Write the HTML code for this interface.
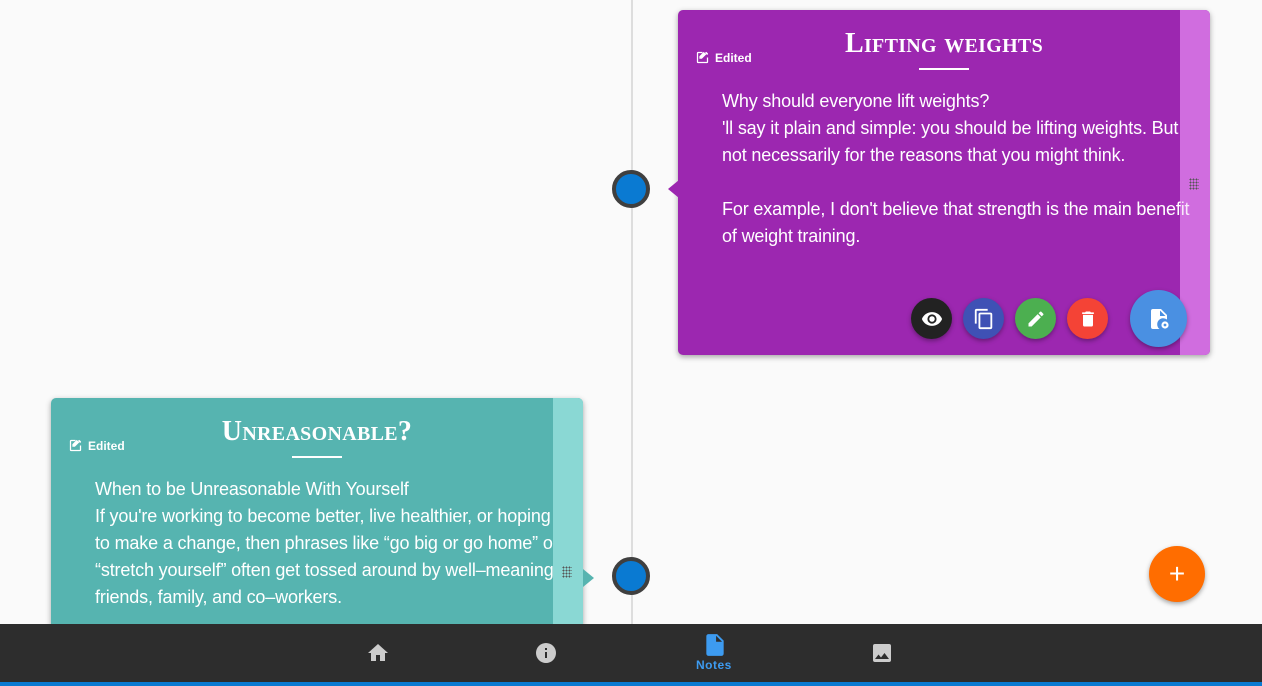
<!DOCTYPE html>
<html><head><meta charset="utf-8"><style>
*{margin:0;padding:0;box-sizing:border-box}
body{width:1262px;height:686px;background:#fafafa;position:relative;overflow:hidden;font-family:"Liberation Sans",sans-serif}
.line{position:absolute;left:631px;top:0;width:2px;height:624px;background:#ddd}
.dot{position:absolute;width:38px;height:38px;border-radius:50%;background:#0a7ad2;border:4px solid #3f3f3f}
.card{position:absolute;width:532px;border-radius:5px;box-shadow:0 2px 6px rgba(0,0,0,.35);overflow:hidden;color:#fff}
.strip{position:absolute;right:0;top:0;bottom:0;width:30px}
.title{position:absolute;font-family:"Liberation Serif",serif;font-variant:small-caps;font-weight:bold;font-size:28px;text-align:center;letter-spacing:.3px}
.uline{position:absolute;height:2px;width:50px;background:#fff}
.ed{position:absolute;font-size:12px;font-weight:bold;display:flex;align-items:center;gap:5px}
.ed svg{width:15px;height:15px}
.txt{position:absolute;font-size:18px;line-height:27px;letter-spacing:-.15px;white-space:nowrap}
.grip{position:absolute;width:10px;height:12px;background-image:radial-gradient(circle,#555 0.8px,transparent 1px);background-size:3px 3px}
.btn{position:absolute;border-radius:50%;box-shadow:0 2px 5px rgba(0,0,0,.35);display:flex;align-items:center;justify-content:center}
.nav{position:absolute;left:0;top:624px;width:1262px;height:58px;background:#2d2d2d}
.bar{position:absolute;left:0;top:682px;width:1262px;height:4px;background:#0a7ad2}
</style></head><body>
<div class="line"></div>

<div class="card" style="left:678px;top:10px;height:345px;background:#9c27b0">
 <div class="ed" style="left:17px;top:40px"><svg viewBox="0 0 24 24"><path fill="#fff" d="M19 19H5V5h7V3H5a2 2 0 0 0-2 2v14a2 2 0 0 0 2 2h14a2 2 0 0 0 2-2v-7h-2v7zM14 3v0l-7 7v4h4l7-7-4-4zm5.6 1.4l-1-1a1 1 0 0 0-1.4 0L16 4.6 19.4 8l1.2-1.2a1 1 0 0 0 0-1.4z"/></svg>Edited</div>
 <div class="title" style="left:0;width:532px;top:18px;">Lifting weights</div>
 <div class="uline" style="left:241px;top:58px"></div>
 <div class="strip" style="background:#d06ee0"></div>
 <div class="txt" style="left:44px;top:78px">Why should everyone lift weights?<br>'ll say it plain and simple: you should be lifting weights. But<br>not necessarily for the reasons that you might think.<br><br>For example, I don't believe that strength is the main benefit<br>of weight training.</div>
 <div class="strip" style="background:rgba(208,110,224,.15)"></div>
 <div class="grip" style="left:511px;top:168px"></div>
 <div class="btn" style="left:233px;top:288px;width:41px;height:41px;background:#222"><svg width="22" height="22" viewBox="0 0 24 24"><path fill="#fff" d="M12 4.5C7 4.5 2.7 7.6 1 12c1.7 4.4 6 7.5 11 7.5s9.3-3.1 11-7.5c-1.7-4.4-6-7.5-11-7.5zM12 17a5 5 0 1 1 0-10 5 5 0 0 1 0 10zm0-8a3 3 0 1 0 0 6 3 3 0 0 0 0-6z"/></svg></div>
 <div class="btn" style="left:285px;top:288px;width:41px;height:41px;background:#3f51b5"><svg width="22" height="22" viewBox="0 0 24 24"><path fill="#fff" d="M16 1H4a2 2 0 0 0-2 2v14h2V3h12V1zm3 4H8a2 2 0 0 0-2 2v14a2 2 0 0 0 2 2h11a2 2 0 0 0 2-2V7a2 2 0 0 0-2-2zm0 16H8V7h11v14z"/></svg></div>
 <div class="btn" style="left:337px;top:288px;width:41px;height:41px;background:#4caf50"><svg width="20" height="20" viewBox="0 0 24 24"><path fill="#fff" d="M3 17.25V21h3.75L17.8 9.94l-3.75-3.75L3 17.25zM20.7 7.04a1 1 0 0 0 0-1.41l-2.34-2.34a1 1 0 0 0-1.41 0l-1.830 1.83 3.75 3.75 1.83-1.83z"/></svg></div>
 <div class="btn" style="left:389px;top:288px;width:41px;height:41px;background:#f44336"><svg width="20" height="20" viewBox="0 0 24 24"><path fill="#fff" d="M6 19a2 2 0 0 0 2 2h8a2 2 0 0 0 2-2V7H6v12zM19 4h-3.5l-1-1h-5l-1 1H5v2h14V4z"/></svg></div>
 <div class="btn" style="left:452px;top:280px;width:57px;height:57px;background:#4a90e2"><svg width="24" height="24" viewBox="0 0 24 24"><path fill="#fff" d="M14 2H6a2 2 0 0 0-2 2v16a2 2 0 0 0 2 2h6.5a6 6 0 0 1 7.5-9.5V8l-6-6zm-1 7V3.5L18.5 9H13z"/><circle cx="18" cy="18" r="3.6" fill="#fff"/><circle cx="18" cy="18" r="1.4" fill="#4a90e2"/></svg></div>
</div>
<svg style="position:absolute;left:668px;top:180px" width="11" height="18"><path d="M11 0L0 9l11 9z" fill="#9c27b0"/></svg>
<div class="dot" style="left:612px;top:170px"></div>

<div class="card" style="left:51px;top:398px;height:240px;background:#56b4b0">
 <div class="ed" style="left:17px;top:40px"><svg viewBox="0 0 24 24"><path fill="#fff" d="M19 19H5V5h7V3H5a2 2 0 0 0-2 2v14a2 2 0 0 0 2 2h14a2 2 0 0 0 2-2v-7h-2v7zM14 3v0l-7 7v4h4l7-7-4-4zm5.6 1.4l-1-1a1 1 0 0 0-1.4 0L16 4.6 19.4 8l1.2-1.2a1 1 0 0 0 0-1.4z"/></svg>Edited</div>
 <div class="title" style="left:0;width:532px;top:18px;">Unreasonable?</div>
 <div class="uline" style="left:241px;top:58px"></div>
 <div class="txt" style="left:44px;top:78px">When to be Unreasonable With Yourself<br>If you're working to become better, live healthier, or hoping<br>to make a change, then phrases like “go big or go home” or<br>“stretch yourself” often get tossed around by well–meaning<br>friends, family, and co–workers.</div>
 <div class="strip" style="background:#8ad8d4"></div>
 <div class="grip" style="left:511px;top:168px"></div>
</div>
<svg style="position:absolute;left:583px;top:569px" width="11" height="18"><path d="M0 0l11 9-11 9z" fill="#56b4b0"/></svg>
<div class="dot" style="left:612px;top:557px"></div>

<div class="btn" style="left:1149px;top:546px;width:56px;height:56px;background:#ff6d00;color:#fff;font-size:28px">+</div>

<div class="nav">
 <svg style="position:absolute;left:366px;top:17px" width="24" height="24" viewBox="0 0 24 24"><path fill="#ccc" d="M10 20v-6h4v6h5v-8h3L12 3 2 12h3v8z"/></svg>
 <svg style="position:absolute;left:534px;top:17px" width="24" height="24" viewBox="0 0 24 24"><path fill="#ccc" d="M12 2a10 10 0 1 0 0 20 10 10 0 0 0 0-20zm1 15h-2v-6h2v6zm0-8h-2V7h2v2z"/></svg>
 <svg style="position:absolute;left:702px;top:8px" width="26" height="26" viewBox="0 0 24 24"><path fill="#3d9bf0" d="M14 2H6a2 2 0 0 0-2 2v16a2 2 0 0 0 2 2h12a2 2 0 0 0 2-2V8l-6-6zm-1 7V3.5L18.5 9H13z"/></svg>
 <div style="position:absolute;left:696px;top:34px;font-size:12px;font-weight:bold;color:#3d9bf0;letter-spacing:.5px">Notes</div>
 <svg style="position:absolute;left:870px;top:17px" width="24" height="24" viewBox="0 0 24 24"><path fill="#ccc" d="M21 19V5a2 2 0 0 0-2-2H5a2 2 0 0 0-2 2v14a2 2 0 0 0 2 2h14a2 2 0 0 0 2-2zM8.5 13.5l2.5 3 3.5-4.5 4.5 6H5l3.5-4.5z"/></svg>
</div>
<div class="bar"></div>
</body></html>
